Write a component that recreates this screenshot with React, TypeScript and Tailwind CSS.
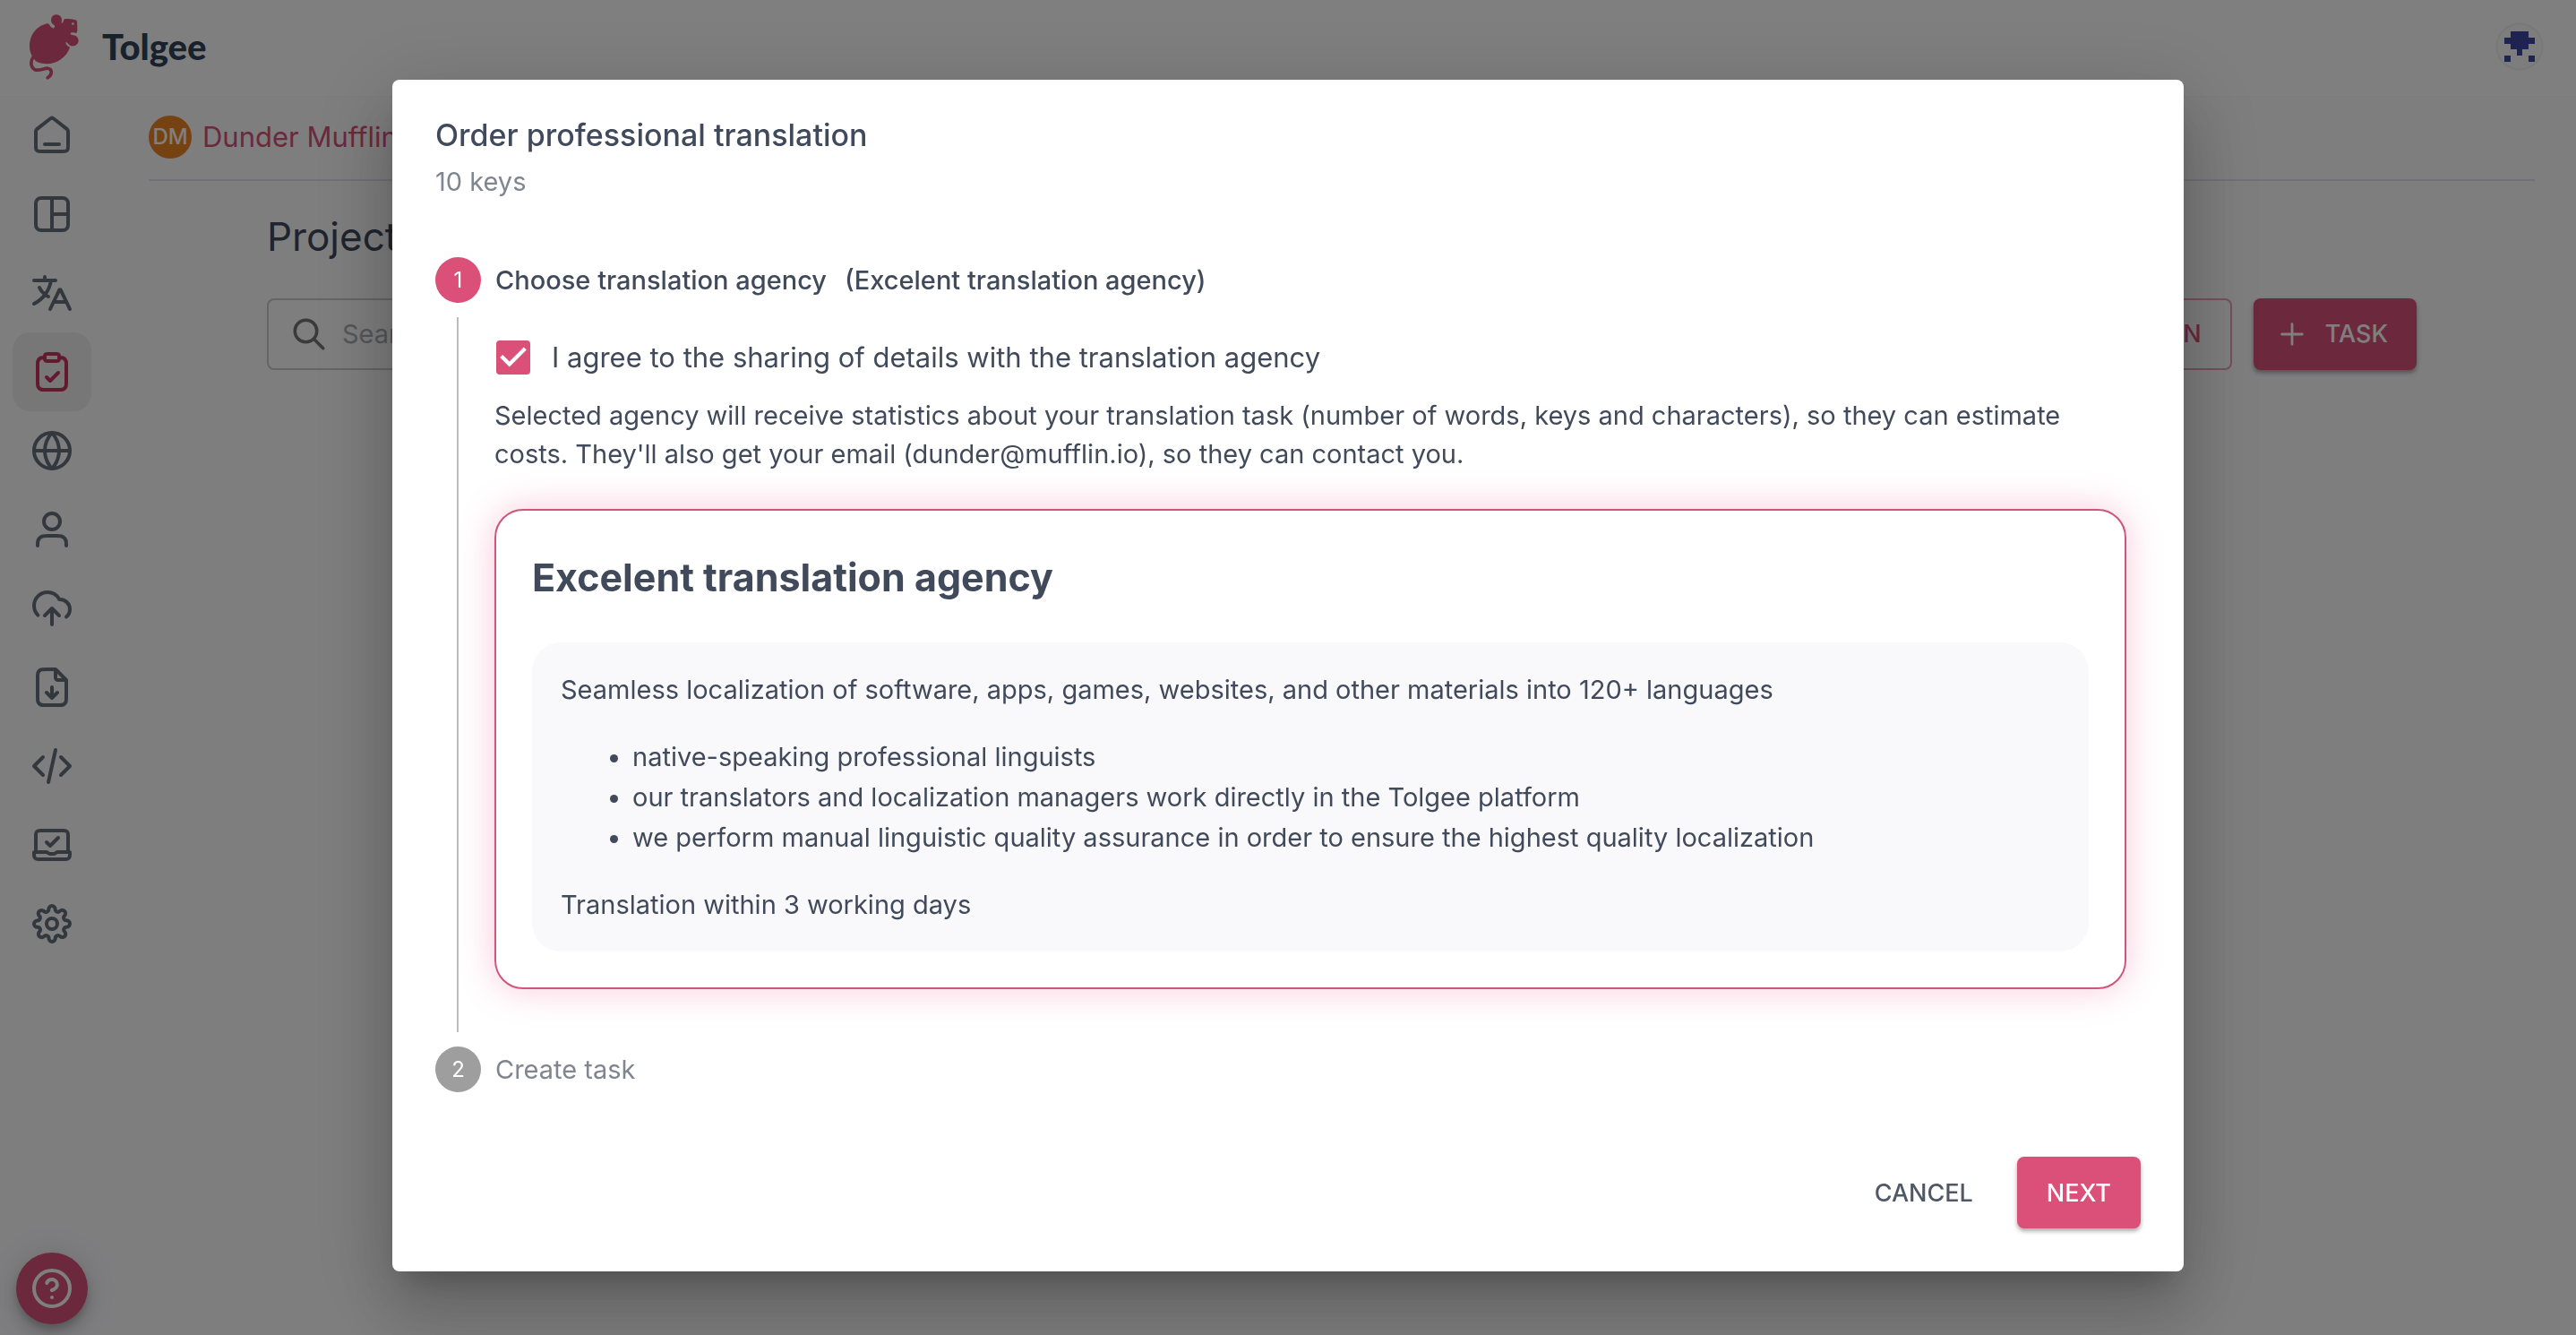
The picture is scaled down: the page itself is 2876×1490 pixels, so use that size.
import { useState } from "react";
import type { ReactNode } from "react";

const NAV_ICONS: { label: string; icon: ReactNode; active?: boolean }[] = [
  {
    label: "Projects",
    icon: (
      <path d="M8 17H16M11.0177 2.764L4.23539 8.03912C3.78202 8.39175 3.55534 8.56806 3.39203 8.78886C3.24737 8.98444 3.1396 9.20478 3.07403 9.43905C3 9.70352 3 9.9907 3 10.5651V17.8C3 18.9201 3 19.4801 3.21799 19.908C3.40973 20.2843 3.71569 20.5903 4.09202 20.782C4.51984 21 5.07989 21 6.2 21H17.8C18.9201 21 19.4802 21 19.908 20.782C20.2843 20.5903 20.5903 20.2843 20.782 19.908C21 19.4801 21 18.9201 21 17.8V10.5651C21 9.9907 21 9.70352 20.926 9.43905C20.8604 9.20478 20.7526 8.98444 20.608 8.78886C20.4447 8.56806 20.218 8.39175 19.7646 8.03913L12.9823 2.764C12.631 2.49075 12.4553 2.35412 12.2613 2.3016C12.0902 2.25526 11.9098 2.25526 11.7387 2.3016C11.5447 2.35412 11.369 2.49075 11.0177 2.764Z" />
    ),
  },
  {
    label: "Dashboard",
    icon: (
      <>
        <rect x="3" y="3" width="18" height="18" rx="3" />
        <path d="M12 3V21M12 12H21" />
      </>
    ),
  },
  {
    label: "Translations",
    icon: (
      <path d="M12.9129 17H20.0871M12.9129 17L11 21M12.9129 17L15.7783 11.009C16.0092 10.5263 16.1246 10.2849 16.2826 10.2086C16.4199 10.1423 16.5801 10.1423 16.7174 10.2086C16.8754 10.2849 16.9908 10.5263 17.2217 11.009L20.0871 17M20.0871 17L22 21M2 5H8M8 5H11.5M8 5V3M11.5 5H14M11.5 5C11.0039 7.95729 9.85259 10.6362 8.16555 12.8844M10 14C9.38747 13.7248 8.76265 13.3421 8.16555 12.8844M8.16555 12.8844C6.81302 11.8478 5.60276 10.4266 5 9M8.16555 12.8844C6.56086 15.0229 4.47143 16.7718 2 18" />
    ),
  },
  {
    label: "Tasks",
    active: true,
    icon: (
      <path d="M16 4C16.93 4 17.395 4 17.7765 4.10222C18.8117 4.37962 19.6204 5.18827 19.8978 6.22354C20 6.60504 20 7.07003 20 8V17.2C20 18.8802 20 19.7202 19.673 20.362C19.3854 20.9265 18.9265 21.3854 18.362 21.673C17.7202 22 16.8802 22 15.2 22H8.8C7.11984 22 6.27976 22 5.63803 21.673C5.07354 21.3854 4.6146 20.9265 4.32698 20.362C4 19.7202 4 18.8802 4 17.2V8C4 7.07003 4 6.60504 4.10222 6.22354C4.37962 5.18827 5.18827 4.37962 6.22354 4.10222C6.60504 4 7.07003 4 8 4M9 15L11 17L15.5 12.5M9.6 6H14.4C14.9601 6 15.2401 6 15.454 5.89101C15.6422 5.79513 15.7951 5.64215 15.891 5.45399C16 5.24008 16 4.96005 16 4.4V3.6C16 3.03995 16 2.75992 15.891 2.54601C15.7951 2.35785 15.6422 2.20487 15.454 2.10899C15.2401 2 14.9601 2 14.4 2H9.6C9.03995 2 8.75992 2 8.54601 2.10899C8.35785 2.20487 8.20487 2.35785 8.10899 2.54601C8 2.75992 8 3.03995 8 3.6V4.4C8 4.96005 8 5.24008 8.10899 5.45399C8.20487 5.64215 8.35785 5.79513 8.54601 5.89101C8.75992 6 9.03995 6 9.6 6Z" />
    ),
  },
  {
    label: "Languages",
    icon: (
      <>
        <circle cx="12" cy="12" r="10" />
        <path d="M2 12H22M12 2C14.5 4.74 15.92 8.29 16 12C15.92 15.71 14.5 19.26 12 22M12 2C9.5 4.74 8.08 8.29 8 12C8.08 15.71 9.5 19.26 12 22" />
      </>
    ),
  },
  {
    label: "Members",
    icon: (
      <path d="M20 21C20 19.6044 20 18.9067 19.8278 18.3389C19.44 17.0605 18.4395 16.06 17.1611 15.6722C16.5933 15.5 15.8956 15.5 14.5 15.5H9.5C8.10444 15.5 7.40665 15.5 6.83886 15.6722C5.56045 16.06 4.56004 17.0605 4.17224 18.3389C4 18.9067 4 19.6044 4 21M16.5 7.5C16.5 9.98528 14.4853 12 12 12C9.51472 12 7.5 9.98528 7.5 7.5C7.5 5.01472 9.51472 3 12 3C14.4853 3 16.5 5.01472 16.5 7.5Z" />
    ),
  },
  {
    label: "Import",
    icon: (
      <path d="M8 16L12 12M12 12L16 16M12 12V21M20 16.7428C21.2215 15.734 22 14.2079 22 12.5C22 9.46243 19.5376 7 16.5 7C16.2815 7 16.0771 6.886 15.9661 6.69774C14.6621 4.48484 12.2544 3 9.5 3C5.35786 3 2 6.35786 2 10.5C2 12.5661 2.83545 14.4371 4.18695 15.7935" />
    ),
  },
  {
    label: "Export",
    icon: (
      <path d="M14 2V6.4C14 7.6 14.4 8 15.6 8H20M9 15L12 18M12 18L15 15M12 18V12M14 2H8.8C7.12 2 6.28 2 5.638 2.327C5.07 2.615 4.615 3.07 4.327 3.638C4 4.28 4 5.12 4 6.8V17.2C4 18.88 4 19.72 4.327 20.362C4.615 20.927 5.07 21.385 5.638 21.673C6.28 22 7.12 22 8.8 22H15.2C16.88 22 17.72 22 18.362 21.673C18.927 21.385 19.385 20.927 19.673 20.362C20 19.72 20 18.88 20 17.2V8L14 2Z" />
    ),
  },
  { label: "Developer", icon: <path d="M17 17L22 12L17 7M7 7L2 12L7 17M14 3L10 21" /> },
  {
    label: "Integrate",
    icon: (
      <path d="M3 16V6.5C3 4.6 3.6 4 5.5 4H18.5C20.4 4 21 4.6 21 6.5V16M9 10.5L11 12.5L15.5 8M2 16.4V17.5C2 19.3 2.7 20 4.5 20H19.5C21.3 20 22 19.3 22 17.5V16.4C22 16.1 21.9 16 21.6 16H15.2C14.6 16 14.3 16.3 14 16.6C13.7 16.9 13.4 17 13 17H11C10.6 17 10.3 16.9 10 16.6C9.7 16.3 9.4 16 8.8 16H2.4C2.1 16 2 16.1 2 16.4Z" />
    ),
  },
  {
    label: "Project settings",
    icon: (
      <g transform="translate(1.09 1.09) scale(0.909)" strokeWidth="2.2">
        <circle cx="12" cy="12" r="3.3" />
        <path d="M19.4 15a1.65 1.65 0 0 0 .33 1.82l.06.06a2 2 0 0 1 0 2.83 2 2 0 0 1-2.83 0l-.06-.06a1.65 1.65 0 0 0-1.82-.33 1.65 1.65 0 0 0-1 1.51V21a2 2 0 0 1-2 2 2 2 0 0 1-2-2v-.09A1.65 1.65 0 0 0 9 19.4a1.65 1.65 0 0 0-1.82.33l-.06.06a2 2 0 0 1-2.83 0 2 2 0 0 1 0-2.83l.06-.06a1.65 1.65 0 0 0 .33-1.82 1.65 1.65 0 0 0-1.51-1H3a2 2 0 0 1-2-2 2 2 0 0 1 2-2h.09A1.65 1.65 0 0 0 4.6 9a1.65 1.65 0 0 0-.33-1.82l-.06-.06a2 2 0 0 1 0-2.83 2 2 0 0 1 2.83 0l.06.06a1.65 1.65 0 0 0 1.82.33H9a1.65 1.65 0 0 0 1-1.51V3a2 2 0 0 1 2-2 2 2 0 0 1 2 2v.09a1.65 1.65 0 0 0 1 1.51 1.65 1.65 0 0 0 1.82-.33l.06-.06a2 2 0 0 1 2.83 0 2 2 0 0 1 0 2.83l-.06.06a1.65 1.65 0 0 0-.33 1.82V9a1.65 1.65 0 0 0 1.51 1H21a2 2 0 0 1 2 2 2 2 0 0 1-2 2h-.09a1.65 1.65 0 0 0-1.51 1z" />
      </g>
    ),
  },
];

function LineIcon({ children, className = "size-12" }: { children: ReactNode; className?: string }) {
  return (
    <svg
      viewBox="0 0 24 24"
      fill="none"
      stroke="currentColor"
      strokeWidth="2"
      strokeLinecap="round"
      strokeLinejoin="round"
      aria-hidden="true"
      className={className}
    >
      {children}
    </svg>
  );
}

function MouseLogo() {
  return (
    <svg viewBox="96 45 172 222" className="h-[74px] w-[57px]" aria-hidden="true">
      <g fill="#d8507a">
        <path d="M112 194C103 182 99 170 99 155C99 112 128 82 161 78C168 82 170 92 180 94C184 88 185 88 183 84C166 78 168 49 188 48C205 48 211 62 206 76C210 80 212 72 216 63C232 61 247 63 257 68C261 72 259 84 260 96C260 103 259 108 257 111C246 107 238 108 236 112C240 118 244 117 250 118C259 120 264 128 264 136C263 150 252 156 240 154C231 152 228 142 221 140C221 148 224 153 235 158C224 192 190 214 158 214C143 214 130 211 119 204Z" />
        <path
          d="M111 192C101 206 103 226 116 233C130 240 146 229 160 229C176 231 177 250 160 261"
          fill="none"
          stroke="#d8507a"
          strokeWidth="11"
          strokeLinecap="round"
        />
      </g>
      <circle cx="245" cy="79" r="4" fill="#fff" />
    </svg>
  );
}

function Identicon() {
  return (
    <svg viewBox="0 0 5 5" className="size-[34px]" shapeRendering="crispEdges" aria-hidden="true">
      <path fill="#3c46a4" d="M1 0H4V1H5V2H4V3H3V4H2V3H1V2H0V1H1ZM0 4H1V5H0ZM4 4H5V5H4Z" />
    </svg>
  );
}

function Header() {
  return (
    <header className="relative flex h-[107px] items-center justify-between bg-white pr-[38px] pb-1 pl-8 shadow-[0_0_3px_rgba(0,0,0,0.05)]">
      <a href="#" className="flex items-center gap-[25px]">
        <MouseLogo />
        <span className="font-['Lato',sans-serif] text-[40px] leading-[48px] font-black text-[#32435a]">Tolgee</span>
      </a>
      <button
        type="button"
        aria-label="User menu"
        className="flex size-[50px] items-center justify-center rounded-full bg-[#fafafa] shadow-[0_0_3px_rgba(0,0,0,0.2)]"
      >
        <Identicon />
      </button>
    </header>
  );
}

function Sidebar() {
  return (
    <nav aria-label="Project" className="flex w-[120px] shrink-0 flex-col pl-[14px] text-[#66717f]">
      {NAV_ICONS.map((item) =>
        item.active ? (
          <a
            key={item.label}
            href="#"
            aria-label={item.label}
            aria-current="page"
            className="flex size-[88px] items-center justify-center rounded-[20px] bg-[#eeeeee] text-[#c8325f]"
          >
            <LineIcon>{item.icon}</LineIcon>
          </a>
        ) : (
          <a key={item.label} href="#" aria-label={item.label} className="flex size-[88px] items-center justify-center">
            <LineIcon>{item.icon}</LineIcon>
          </a>
        ),
      )}
    </nav>
  );
}

function TasksPage() {
  return (
    <main className="min-w-0 grow px-[46px]">
      <nav aria-label="Breadcrumb" className="flex h-[95px] items-center border-b-2 border-[#e2e2ee] pb-0.5">
        <a href="#" className="flex items-center gap-3 text-[31px] leading-[40px] text-[#d8507a]">
          <span className="flex size-12 items-center justify-center rounded-full bg-[#ee8424] text-[24px] font-medium text-white">
            DM
          </span>
          Dunder Mufflin
        </a>
      </nav>
      <div className="mx-auto max-w-[2400px] pt-8">
        <h1 className="text-[44px] leading-[60px] text-[#3e485c]">Project tasks</h1>
        <div className="mt-[39px] flex items-center justify-between">
          <label className="flex h-20 w-[480px] items-center gap-4 rounded-lg border-2 border-[#cbcbcf] px-6">
            <LineIcon className="size-[42px] shrink-0 text-[#757575]">
              <circle cx="10" cy="10" r="7" />
              <path d="M15.2 15.2L21 21" />
            </LineIcon>
            <input
              type="text"
              aria-label="Search"
              placeholder="Search..."
              className="w-full bg-transparent text-[29px] leading-[40px] outline-none placeholder:text-[#a9adb5]"
            />
          </label>
          <div className="flex items-center gap-6">
            <button
              type="button"
              className="h-20 rounded-lg border-2 border-[#e9a0b6] px-8 text-[27px] font-medium text-[#d8507a]"
            >
              ORDER TRANSLATION
            </button>
            <button
              type="button"
              className="flex h-20 items-center gap-5 rounded-lg bg-[#d8507a] pr-8 pl-[26px] text-[27px] font-medium text-white shadow-[0_3px_5px_rgba(0,0,0,0.35)]"
            >
              <LineIcon className="size-[34px]">
                <path d="M12 4V20M4 12H20" />
              </LineIcon>
              TASK
            </button>
          </div>
        </div>
      </div>
    </main>
  );
}

function StepBadge({ number, active }: { number: number; active?: boolean }) {
  return (
    <span
      className={
        active
          ? "flex size-[51px] shrink-0 items-center justify-center rounded-full bg-[#da5079] text-2xl text-white"
          : "flex size-[51px] shrink-0 items-center justify-center rounded-full bg-[#9e9e9e] text-2xl text-white"
      }
    >
      {number}
    </span>
  );
}

function AgencyCard() {
  return (
    <article className="mt-10 rounded-[32px] border-2 border-[#cf557b] bg-white px-10 pt-[46px] pb-10 shadow-[0_0_40px_rgba(233,64,120,0.28)]">
      <h3 className="text-[43px] leading-[56px] font-bold">Excelent translation agency</h3>
      <div className="mt-[45px] rounded-[32px] bg-[#f9f9fb] px-8 py-[30px] leading-[45px]">
        <p>Seamless localization of software, apps, games, websites, and other materials into 120+ languages</p>
        <ul className="my-[30px] list-disc pl-20">
          <li>native-speaking professional linguists</li>
          <li>our translators and localization managers work directly in the Tolgee platform</li>
          <li>we perform manual linguistic quality assurance in order to ensure the highest quality localization</li>
        </ul>
        <p>Translation within 3 working days</p>
      </div>
    </article>
  );
}

function OrderDialog() {
  const [agreed, setAgreed] = useState(true);
  return (
    <section
      role="dialog"
      aria-modal="true"
      aria-labelledby="dialog-title"
      className="w-full max-w-[2000px] rounded-lg bg-white p-12 pt-9 text-[29px] leading-[43px] text-[#414a5b] shadow-[0_22px_30px_-14px_rgba(0,0,0,0.2),0_48px_76px_6px_rgba(0,0,0,0.14),0_18px_92px_16px_rgba(0,0,0,0.12)]"
    >
      <h2 id="dialog-title" className="text-[34px] leading-[52px] font-medium">
        Order professional translation
      </h2>
      <p className="mt-1 text-[#80868f]">10 keys</p>

      <ol className="mt-[63px]">
        <li>
          <div className="flex items-center gap-4">
            <StepBadge number={1} active />
            <h3 className="flex gap-5 font-medium">
              <span>Choose translation agency</span>
              <span>(Excelent translation agency)</span>
            </h3>
          </div>
          <div className="my-4 ml-6 border-l-2 border-[#bdbdbd] pt-[23px] pr-4 pb-12 pl-10">
            <label className="flex items-center gap-6 pl-0.5 text-[31px]">
              <span className="relative flex size-[38px] shrink-0">
                <input
                  type="checkbox"
                  checked={agreed}
                  onChange={(event) => setAgreed(event.target.checked)}
                  className="peer size-[38px] appearance-none rounded-[4px] border-4 border-[#80868f] checked:border-0 checked:bg-[#da5079]"
                />
                <svg
                  viewBox="0 0 18 18"
                  className="pointer-events-none absolute inset-0 hidden size-[38px] peer-checked:block"
                  aria-hidden="true"
                >
                  <path fill="#fff" d="M7 14L2 9l1.41-1.41L7 11.17l7.59-7.59L16 5z" />
                </svg>
              </span>
              I agree to the sharing of details with the translation agency
            </label>
            <p className="mt-[22px]">
              Selected agency will receive statistics about your translation task (number of words, keys and
              characters), so they can estimate costs. They'll also get your email (dunder@mufflin.io), so they can
              contact you.
            </p>
            <AgencyCard />
          </div>
        </li>
        <li className="flex items-center gap-4 text-[#80868f]">
          <StepBadge number={2} />
          Create task
        </li>
      </ol>

      <div className="mt-[72px] flex justify-end gap-4">
        <button type="button" className="h-20 rounded-lg px-[33px] text-[27px] font-medium text-[#4f5866]">
          CANCEL
        </button>
        <button
          type="button"
          className="h-20 rounded-lg bg-[#da5079] px-[33px] text-[27px] font-medium text-white shadow-[0_3px_5px_rgba(0,0,0,0.35)]"
        >
          NEXT
        </button>
      </div>
    </section>
  );
}

export default function App() {
  return (
    <div className="min-h-screen bg-[#fcfcff] font-['Inter',sans-serif] text-[#414a5b]">
      <Header />
      <div className="flex">
        <Sidebar />
        <TasksPage />
      </div>
      <button
        type="button"
        aria-label="Help"
        className="fixed bottom-3 left-[18px] flex size-20 items-center justify-center rounded-full bg-[#d8507a] text-white shadow-[0_6px_10px_-2px_rgba(0,0,0,0.2),0_12px_20px_rgba(0,0,0,0.14),0_2px_36px_rgba(0,0,0,0.12)]"
      >
        <LineIcon>
          <circle cx="12" cy="12" r="10" />
          <path d="M9.09 9a3 3 0 0 1 5.83 1c0 2-3 3-3 3M12 17h.01" />
        </LineIcon>
      </button>
      <div className="fixed inset-0 flex items-start justify-center overflow-auto bg-black/50 px-16 pt-[89px]">
        <OrderDialog />
      </div>
    </div>
  );
}
